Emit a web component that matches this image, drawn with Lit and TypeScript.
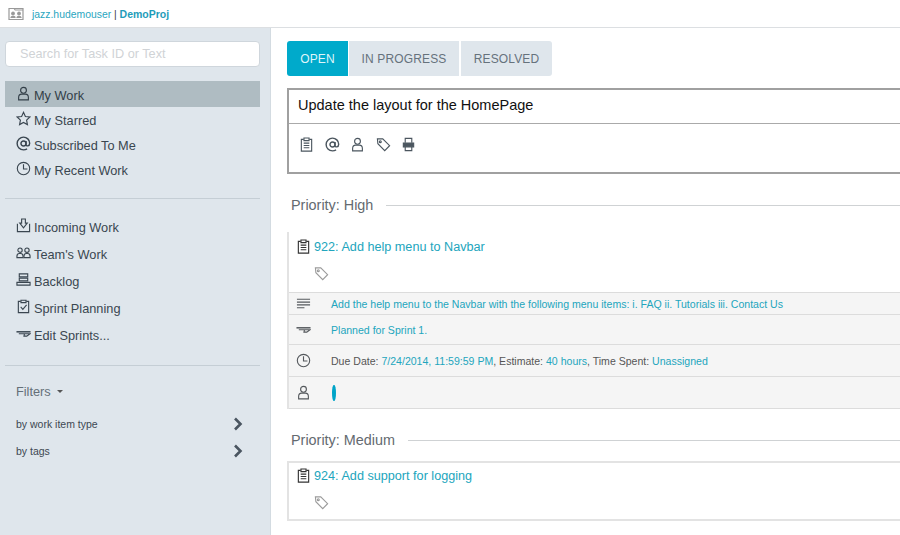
import { LitElement, html, css, svg } from 'lit';
import { customElement } from 'lit/decorators.js';

// stroke icons on a 16x16 box
const ICONS: Record<string, unknown> = {
  person: svg`<circle cx="8" cy="4.6" r="3.1"/><path d="M2.8 14.800v-2.500c0-2 1.500-3.600 3.200-3.600h4c1.700 0 3.200 1.600 3.200 3.600v2.500z"/>`,
  star: svg`<path d="M8 1.400l2 4.400 4.800.6-3.500 3.300.9 4.800L8 12.200l-4.200 2.300.9-4.800L1.200 6.400 6 5.800z"/>`,
  at: svg`<circle cx="8" cy="8" r="2.700" stroke-width="1.500"/><path stroke-width="1.500" d="M10.700 5.300v4c0 1.900 3.900 1.900 3.900-1.600C14.600 4 11.500 1.200 8 1.200S1.200 4.300 1.200 8s2.900 6.800 6.800 6.800c1.500 0 2.700-.4 3.800-1.100"/>`,
  clock: svg`<circle cx="8" cy="8" r="6.600"/><path d="M8 3.500V8.500h4.200"/>`,
  inbox: svg`<path d="M1.500 6v8.500h13V6"/><path d="M6 1h4v4.500h2L8 10.500 4 5.500h2z"/>`,
  team: svg`<circle cx="4.300" cy="5.500" r="2.300"/><path d="M1 13.500v-1.500c0-1.700 1.200-3 2.500-3h1.600c1.300 0 2.400 1.300 2.400 3v1.500z"/><circle cx="11.700" cy="5.500" r="2.300"/><path d="M8.500 13.500v-1.500c0-1.700 1.200-3 2.400-3h1.600c1.300 0 2.500 1.300 2.500 3v1.500z"/>`,
  backlog: svg`<path d="M3.500 2h9v3h-9zM3.500 6.500h9v3h-9z"/><path d="M1 11h14v3H1z"/>`,
  sprint: svg`<path d="M5 2.500H2.500v12h11v-12H11"/><path d="M5.300 1.300h5.400v2.600H5.300z"/><path d="M5 8.500l2.300 2.500 4-4.800"/>`,
  sprintEdit: svg`<path d="M0.500 6.200h15" stroke-width="1.600"/><path d="M3 8.200h12l-3.500 2.600H8.500l.5-2.400"/>`,
  clipboard: svg`<path d="M5 2.500H2.500v12.500h11V2.500H11"/><path d="M5.300 1h5.400v2.800H5.300zM5 6.500h6M5 9h6M5 11.500h6"/>`,
  tag: svg`<path d="M1.500 2h5.700l7.300 7.300-5.200 5.200L2 7.200z"/><circle cx="4.600" cy="5" r="1"/>`,
  print: svg`<path d="M4.500 6V1.500h7V6M4.500 10.500V14.500h7V10.500"/><path d="M2.500 6.500h11v4h-11z" fill="currentColor"/>`,
  lines: svg`<path d="M1 3.500h14M1 6.500h14M1 9.500h14M1 12.500h8"/>`,
  card: svg`<path d="M1 2.500h14v11H1z"/><path d="M1 2.500h5l1.200 1.500H15" /><circle cx="5" cy="7.500" r="1.300" fill="currentColor"/><path d="M3 11.500c0-1.500 4-1.500 4 0z" fill="currentColor"/><circle cx="11" cy="7.500" r="1.300" fill="currentColor"/><path d="M9 11.500c0-1.500 4-1.500 4 0z" fill="currentColor"/>`,
};

const icon = (name: string, size = 15) => html`<svg class="icon" width=${size} height=${size} viewBox="0 0 16 16">${ICONS[name]}</svg>`;

@customElement('app-root')
export class AppRoot extends LitElement {
  static styles = css`
    :host {
      display: block;
      width: 900px;
      height: 535px;
      overflow: hidden;
      background: #fff;
      font-family: "Liberation Sans", Arial, sans-serif;
      color: #3a4650;
    }
    .icon {
      fill: none;
      stroke: currentColor;
      stroke-width: 1.2;
      flex: none;
    }
    .topbar {
      height: 28px;
      box-sizing: border-box;
      border-bottom: 1px solid #dcdfe2;
      display: flex;
      align-items: center;
      padding-left: 8px;
      gap: 8px;
      font-size: 10.4px;
      color: #2aa6c0;
    }
    .topbar .icon { color: #999; }
    .topbar b { color: #1e9cb9; font-size: 10.500px; }
    .topbar .sep { color: #444; }
    .body {
      display: flex;
      height: 507px;
    }
    .side {
      width: 271px;
      flex: none;
      box-sizing: border-box;
      background: #dfe6ec;
      border-right: 1px solid #d3dbe1;
      padding: 13px 10px 0 5px;
    }
    .search {
      height: 26px;
      box-sizing: border-box;
      background: #fff;
      border: 1px solid #cfd6dc;
      border-radius: 4px;
      padding-left: 14px;
      font-size: 12.700px;
      line-height: 25px;
      color: #d0d3d6;
      margin-bottom: 14px;
    }
    .nav-item {
      display: flex;
      align-items: center;
      box-sizing: border-box;
      height: 25px;
      padding: 2px 0 0 11px;
      gap: 3px;
      font-size: 12.75px;
    }
    .nav-item .icon { position: relative; top: -2px; }
    .nav-item.active {
      height: 26px;
      background: #afbcc2;
      color: #333f48;
    }
    .wide .nav-item {
      height: 27px;
      padding-top: 0;
    }
    .rule {
      border-top: 1px solid #c5ced5;
    }
    .group1 { padding-bottom: 16px; }
    .wide { padding: 15px 0 16px; }
    .filters {
      padding: 18px 0 0 11px;
      font-size: 12.75px;
      color: #646f78;
      display: flex;
      align-items: center;
      gap: 6px;
    }
    .caret {
      width: 0;
      height: 0;
      border-left: 3.5px solid transparent;
      border-right: 3.5px solid transparent;
      border-top: 3.5px solid #555;
    }
    .filter-row {
      display: flex;
      align-items: center;
      justify-content: space-between;
      height: 27px;
      padding: 0 17px 0 11px;
      font-size: 10.5px;
      color: #3d4852;
    }
    .filter-list { padding-top: 11px; }
    .chev {
      fill: none;
      stroke: #4a5560;
      stroke-width: 2.600;
    }
    .main {
      flex: 1;
      min-width: 0;
      padding: 13px 0 0 16px;
      overflow: hidden;
    }
    .tabs {
      display: flex;
      gap: 1px;
      height: 35px;
      margin-bottom: 12px;
      font-size: 12px;
      letter-spacing: 0.15px;
    }
    .tab {
      display: flex;
      align-items: center;
      justify-content: center;
      background: #dfe6ec;
      color: #66727c;
    }
    .tab.open {
      width: 61px;
      background: #00aacb;
      color: #dff5fa;
      border-radius: 3px 0 0 3px;
    }
    .tab.progress { width: 110px; }
    .tab.resolved { width: 91px; border-radius: 0 3px 3px 0; margin-left: 1px; }
    .compose {
      height: 86px;
      box-sizing: border-box;
      border: 2px solid #a0a0a0;
      border-right: none;
      margin-right: -2px;
    }
    .compose-title {
      height: 34px;
      box-sizing: border-box;
      border-bottom: 1px solid #aaa;
      padding: 0 0 3px 9px;
      display: flex;
      align-items: center;
      font-size: 14.500px;
      color: #111;
    }
    .compose-tools {
      display: flex;
      gap: 10.500px;
      padding: 13px 0 0 10px;
      color: #4b565f;
    }
    .priority {
      display: flex;
      align-items: center;
      gap: 13px;
      padding-left: 4px;
      font-size: 14.400px;
      color: #646a70;
      height: 20px;
      margin-top: 21px;
    }
    .priority::after {
      content: "";
      flex: 1;
      border-top: 1px solid #cfd2d4;
    }
    .card {
      margin-top: 17px;
      border-left: 2px solid #e3e3e3;
      box-sizing: border-box;
      margin-bottom: 21px;
    }
    .card.bordered {
      border: 2px solid #e3e3e3;
      border-right: none;
      margin-top: 11px;
    }
    .card-head {
      padding: 7px 0 0 7px;
      height: 60px;
      box-sizing: border-box;
    }
    .bordered .card-head {
      padding-top: 5px;
      height: 56px;
    }
    .card-title {
      display: flex;
      align-items: center;
      gap: 3px;
      font-size: 12.650px;
      color: #22a5bd;
    }
    .card-title .icon { color: #333; }
    .card-tag {
      color: #9b9b9b;
      padding: 12px 0 0 18px;
      height: 16px;
    }
    .row {
      display: flex;
      align-items: center;
      box-sizing: border-box;
      background: #f5f5f5;
      border-top: 1px solid #dcdcdc;
      font-size: 10.550px;
      color: #555;
    }
    .row:last-child { border-bottom: 1px solid #dcdcdc; }
    .row-icon {
      width: 42px;
      box-sizing: border-box;
      padding-left: 7px;
      display: flex;
      color: #55595d;
    }
    .link { color: #22a5bd; }
    .pill {
      width: 3.5px;
      height: 16px;
      margin-left: 1px;
      border-radius: 50%;
      background: #00a4c8;
    }
  `;

  render() {
    const chevron = html`<svg class="chev" width="10" height="14" viewBox="0 0 10 14"><path d="M2 1.500L7.500 7 2 12.500"/></svg>`;
    return html`
      <div class="topbar">
        ${icon('card', 16)}
        <span>jazz.hudemouser <span class="sep">|</span> <b>DemoProj</b></span>
      </div>
      <div class="body">
        <aside class="side">
          <div class="search">Search for Task ID or Text</div>
          <div class="group1">
            <div class="nav-item active">${icon('person')}My Work</div>
            <div class="nav-item">${icon('star')}My Starred</div>
            <div class="nav-item">${icon('at')}Subscribed To Me</div>
            <div class="nav-item">${icon('clock')}My Recent Work</div>
          </div>
          <div class="rule"></div>
          <div class="wide">
            <div class="nav-item">${icon('inbox')}Incoming Work</div>
            <div class="nav-item">${icon('team')}Team's Work</div>
            <div class="nav-item">${icon('backlog')}Backlog</div>
            <div class="nav-item">${icon('sprint')}Sprint Planning</div>
            <div class="nav-item">${icon('sprintEdit')}Edit Sprints...</div>
          </div>
          <div class="rule"></div>
          <div class="filters">Filters <span class="caret"></span></div>
          <div class="filter-list">
            <div class="filter-row">by work item type ${chevron}</div>
            <div class="filter-row">by tags ${chevron}</div>
          </div>
        </aside>
        <main class="main">
          <div class="tabs">
            <div class="tab open">OPEN</div>
            <div class="tab progress">IN PROGRESS</div>
            <div class="tab resolved">RESOLVED</div>
          </div>
          <div class="compose">
            <div class="compose-title">Update the layout for the HomePage</div>
            <div class="compose-tools">
              ${icon('clipboard')}${icon('at')}${icon('person')}${icon('tag')}${icon('print')}
            </div>
          </div>
          <div class="priority">Priority: High</div>
          <section class="card">
            <div class="card-head">
              <div class="card-title">${icon('clipboard')}922: Add help menu to Navbar</div>
              <div class="card-tag">${icon('tag')}</div>
            </div>
            <div class="row" style="height:22px">
              <span class="row-icon">${icon('lines')}</span>
              <span class="link">Add the help menu to the Navbar with the following menu items: i. FAQ ii. Tutorials iii. Contact Us</span>
            </div>
            <div class="row" style="height:30px">
              <span class="row-icon">${icon('sprintEdit')}</span>
              <span class="link">Planned for Sprint 1.</span>
            </div>
            <div class="row" style="height:32px">
              <span class="row-icon">${icon('clock')}</span>
              <span>Due Date: <span class="link">7/24/2014, 11:59:59 PM</span>, Estimate: <span class="link">40 hours</span>, Time Spent: <span class="link">Unassigned</span></span>
            </div>
            <div class="row" style="height:33px">
              <span class="row-icon">${icon('person')}</span>
              <span class="pill"></span>
            </div>
          </section>
          <div class="priority">Priority: Medium</div>
          <section class="card bordered">
            <div class="card-head">
              <div class="card-title">${icon('clipboard')}924: Add support for logging</div>
              <div class="card-tag">${icon('tag')}</div>
            </div>
          </section>
        </main>
      </div>
    `;
  }
}
